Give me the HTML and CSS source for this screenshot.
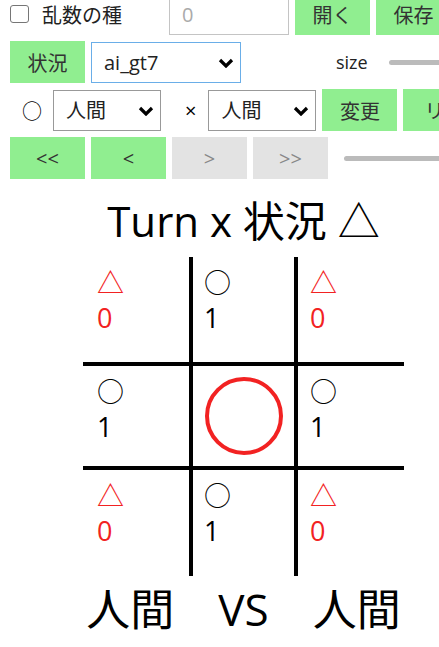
FILE: index.html
```html
<!DOCTYPE html>
<html lang="ja">
<head>
    <meta charset="UTF-8">
    <title>状況</title>
    <link rel="stylesheet" href="styles.css">
</head>
<body>
<div id="main-container">
    <div id="toolbar">
        <div class="row">
            <label class="seed-label"><input type="checkbox" class="seed-check">乱数の種</label>
            <input class="seed-input" type="text" placeholder="0">
            <button class="btn">開く</button>
            <button class="btn">保存</button>
        </div>
        <div class="row">
            <button class="btn">状況</button>
            <span class="select-wrap wide">
                <select class="sel focused">
                    <option>ai_gt7</option>
                </select>
                <svg class="chevron" width="16" height="10" viewBox="0 0 16 10"><path d="M2 2 L8 8 L14 2" fill="none" stroke="#000" stroke-width="3.2"/></svg>
            </span>
            <label class="size-label">size</label>
            <input class="slider size-slider" type="range" min="0" max="100" value="100">
        </div>
        <div class="row">
            <span class="mark-label circle">○</span>
            <span class="select-wrap">
                <select class="sel">
                    <option>人間</option>
                </select>
                <svg class="chevron" width="16" height="10" viewBox="0 0 16 10"><path d="M2 2 L8 8 L14 2" fill="none" stroke="#000" stroke-width="3.2"/></svg>
            </span>
            <span class="mark-label cross">×</span>
            <span class="select-wrap">
                <select class="sel">
                    <option>人間</option>
                </select>
                <svg class="chevron" width="16" height="10" viewBox="0 0 16 10"><path d="M2 2 L8 8 L14 2" fill="none" stroke="#000" stroke-width="3.2"/></svg>
            </span>
            <button class="btn">変更</button>
            <button class="btn btn-auto">リセット</button>
        </div>
        <div class="row">
            <button class="btn">&lt;&lt;</button>
            <button class="btn">&lt;</button>
            <button class="btn" disabled>&gt;</button>
            <button class="btn" disabled>&gt;&gt;</button>
            <input class="slider step-slider" type="range" min="0" max="100" value="100">
        </div>
    </div>
    <div id="game">
        <div class="turn-title">Turn x 状況 △</div>
        <div class="board">
            <div class="cell c0 r0 tri">△<br>0</div>
            <div class="cell c1 r0">○<br>1</div>
            <div class="cell c2 r0 tri">△<br>0</div>
            <div class="cell c0 r1">○<br>1</div>
            <div class="cell c1 r1 center">
                <svg width="82" height="82" viewBox="0 0 82 82"><circle cx="41" cy="41" r="37" fill="none" stroke="#f22222" stroke-width="4"/></svg>
            </div>
            <div class="cell c2 r1">○<br>1</div>
            <div class="cell c0 r2 tri">△<br>0</div>
            <div class="cell c1 r2">○<br>1</div>
            <div class="cell c2 r2 tri">△<br>0</div>
        </div>
        <div class="players">
            <span>人間</span>
            <span>VS</span>
            <span>人間</span>
        </div>
    </div>
</div>
</body>
</html>
```

FILE: styles.css
```css
html, body {
    margin: 0;
    padding: 0;
    overflow: hidden;
}
body {
    font-family: "Open Sans", "Noto Sans CJK JP", sans-serif;
    color: #000;
    background: #fff;
}
#toolbar {
    padding-left: 7px;
    margin-top: -10px;
}
.row {
    display: flex;
    align-items: center;
    height: 48px;
    white-space: nowrap;
}
.row > * {
    flex: none;
    margin: 0 3px;
}
.btn {
    width: 75px;
    height: 42px;
    border: none;
    background: #90ee90;
    color: #333;
    font-family: inherit;
    font-size: 20px;
    padding: 0;
    overflow: hidden;
}
.btn-auto {
    width: auto;
    padding: 0 21px;
}
.btn:disabled {
    background: #e3e3e3;
    color: #888;
}
.seed-label {
    display: flex;
    align-items: center;
    font-size: 20px;
    color: #222;
    margin-right: 44px;
}
.seed-check {
    appearance: none;
    flex: none;
    width: 19px;
    height: 18px;
    box-sizing: border-box;
    border: 1.5px solid #767676;
    border-radius: 3px;
    background: #fff;
    margin: 0 13px 0 0;
}
.seed-input {
    width: 120px;
    height: 42px;
    box-sizing: border-box;
    border: 1px solid #c4c4c4;
    padding: 0 12px;
    font-family: inherit;
    font-size: 20px;
}
.seed-input::placeholder {
    color: #aaa;
}
.select-wrap {
    position: relative;
    display: inline-block;
}
.sel {
    appearance: none;
    width: 108px;
    height: 41px;
    border: 1px solid #999;
    border-radius: 0;
    background: #fff;
    padding: 0 0 0 12px;
    font-family: inherit;
    font-size: 20px;
    color: #222;
}
.select-wrap.wide .sel {
    width: 150px;
}
.sel.focused {
    border-color: #6aaee8;
}
.chevron {
    position: absolute;
    right: 7px;
    top: 16px;
    pointer-events: none;
}
.size-label {
    font-size: 18px;
    margin-left: 92px !important;
    color: #222;
}
.slider {
    appearance: none;
    height: 5px;
    border-radius: 3px;
    background: #bbb;
}
.slider::-webkit-slider-thumb {
    appearance: none;
    width: 0;
    height: 0;
}
.size-slider {
    width: 140px;
    margin-left: 18px !important;
}
.step-slider {
    width: 160px;
    margin-left: 13px !important;
}
.mark-label {
    font-size: 20px;
}
.mark-label.circle {
    margin: 0 8px 0 15px;
}
.mark-label.cross {
    margin: 0 9px 0 21px;
}
#game {
    width: 487px;
    text-align: center;
}
.turn-title {
    font-size: 42px;
    line-height: 57px;
    margin-top: 10px;
}
.board {
    display: grid;
    grid-template-columns: 106px 109px 106px;
    grid-template-rows: 105px 108px 106px;
    width: 321px;
    margin: 8px auto 0;
    text-align: left;
}
.cell {
    box-sizing: border-box;
    font-size: 27px;
    line-height: 35px;
    padding-top: 8px;
}
.cell.tri {
    color: #f22222;
}
.c0 { padding-left: 14px; }
.c1 {
    padding-left: 11px;
    border-left: 4px solid #000;
    border-right: 4px solid #000;
}
.c2 { padding-left: 12px; }
.r1 {
    border-top: 4px solid #000;
    border-bottom: 4px solid #000;
}
.cell.center {
    display: flex;
    align-items: center;
    justify-content: center;
    padding: 0;
}
.players {
    display: flex;
    justify-content: center;
    gap: 44px;
    font-size: 44px;
    line-height: 54px;
    margin-top: 6px;
}
```
